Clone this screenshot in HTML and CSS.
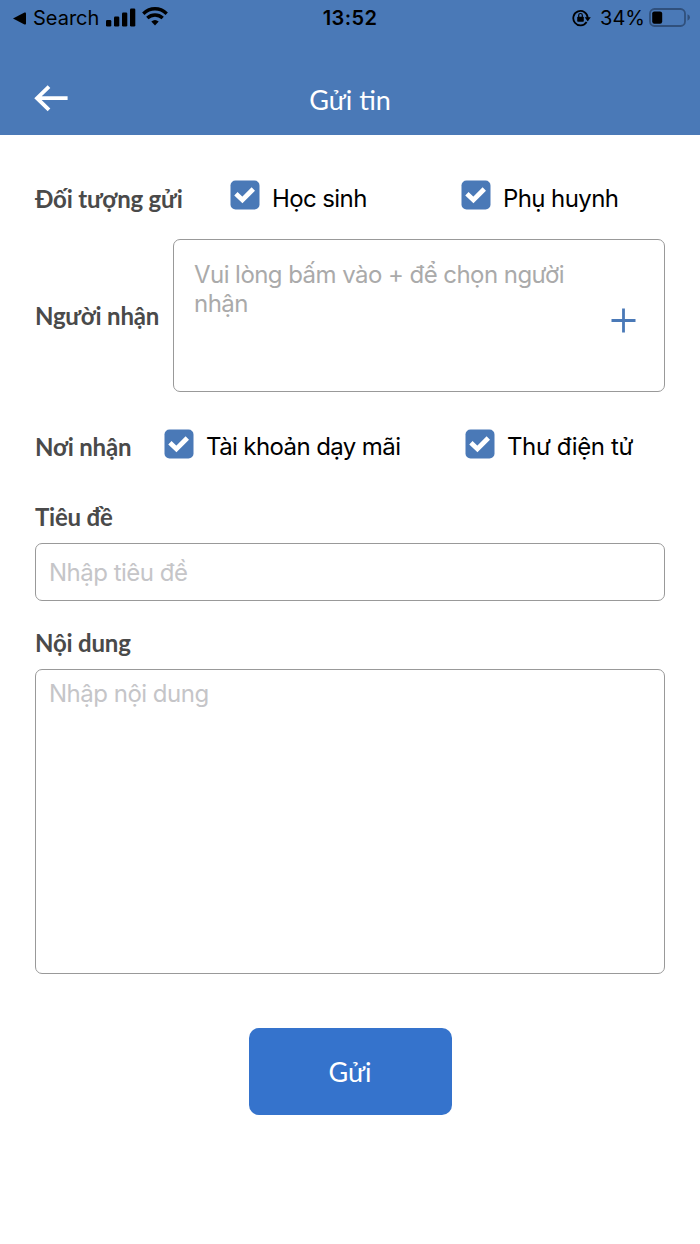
FILE: index.html
```html
<!DOCTYPE html>
<html lang="vi">
<head>
  <meta charset="UTF-8">
  <title>Gửi tin</title>
  <link rel="stylesheet" href="styles.css">
</head>
<body>

  <div class="header">
    <div class="status-bar">
      <div class="status-left">
        <svg class="caret" width="13" height="13" viewBox="0 0 13 13"><path d="M0 6.5L11.5 .6Q13 0 13 1.6V11.4Q13 13 11.5 12.4Z"/></svg>
        <span class="search">Search</span>
        <svg class="signal" width="30" height="19" viewBox="0 0 30 19">
          <rect x="0" y="12" width="5.3" height="6.5" rx="1.3"/>
          <rect x="8" y="8.5" width="5.3" height="10" rx="1.3"/>
          <rect x="16" y="4.5" width="5.3" height="14" rx="1.3"/>
          <rect x="24" y="0.5" width="5.3" height="18" rx="1.3"/>
        </svg>
        <svg class="wifi" width="26" height="19" viewBox="0 0 26 19">
          <path class="arc" d="M1.3 6.7Q6.5 1.8 13 1.8T24.7 6.7"/>
          <path class="arc" d="M5.3 11Q8.7 8 13 8T20.7 11"/>
          <path d="M9.3 14.6Q13 11.4 16.7 14.6L13 18.5Z"/>
        </svg>
      </div>
      <div class="time">13:52</div>
      <div class="status-right">
        <svg class="lock" width="20" height="18" viewBox="0 0 20 18">
          <path class="ring" d="M14.6 13A7.2 7.2 0 1 1 15.7 9"/>
          <path d="M12.7 8.2H18.8L15.7 12.6Z"/>
          <rect x="5.2" y="7.8" width="6.6" height="5" rx=".8"/>
          <path class="shackle" d="M6.7 8V6.3a1.8 1.8 0 0 1 3.6 0V8"/>
        </svg>
        <span class="percent">34%</span>
        <svg class="battery" width="42" height="20" viewBox="0 0 42 20">
          <rect class="case" x="1" y="1" width="35" height="17" rx="4.5"/>
          <rect x="3.2" y="3.4" width="10" height="12.4" rx="2.2"/>
          <path class="tip" d="M38.5 6.3Q41 7.4 41 9.5T38.5 12.7Z"/>
        </svg>
      </div>
    </div>
    <div class="nav">
      <svg class="back" width="34" height="27" viewBox="0 0 34 27"><path d="M15 1.6L3 13.2L15 24.8M3 13.2H33.6"/></svg>
      <h1>Gửi tin</h1>
    </div>
  </div>

  <div class="form">
    <div class="row target">
      <div class="label">Đối tượng gửi</div>
      <div class="option">
        <svg class="check" width="30" height="30" viewBox="0 0 30 30"><rect x=".5" y=".5" width="29" height="29" rx="5"/><path d="M5.9 13.8L12.4 19.9L23.3 9"/></svg>
        <span>Học sinh</span>
      </div>
      <div class="option">
        <svg class="check" width="30" height="30" viewBox="0 0 30 30"><rect x=".5" y=".5" width="29" height="29" rx="5"/><path d="M5.9 13.8L12.4 19.9L23.3 9"/></svg>
        <span>Phụ huynh</span>
      </div>
    </div>

    <div class="row receiver">
      <div class="label">Người nhận</div>
      <div class="box receiver-box">
        <div class="hint">Vui lòng bấm vào + để chọn người nhận</div>
        <svg class="plus" width="25" height="25" viewBox="0 0 25 25"><path d="M12.5 .5V24.5M.5 12.5H24.5"/></svg>
      </div>
    </div>

    <div class="row place">
      <div class="label">Nơi nhận</div>
      <div class="option">
        <svg class="check" width="30" height="30" viewBox="0 0 30 30"><rect x=".5" y=".5" width="29" height="29" rx="5"/><path d="M5.9 13.8L12.4 19.9L23.3 9"/></svg>
        <span>Tài khoản dạy mãi</span>
      </div>
      <div class="option">
        <svg class="check" width="30" height="30" viewBox="0 0 30 30"><rect x=".5" y=".5" width="29" height="29" rx="5"/><path d="M5.9 13.8L12.4 19.9L23.3 9"/></svg>
        <span class="email">Thư điện tử</span>
      </div>
    </div>

    <div class="label">Tiêu đề</div>
    <input type="text" class="box title-input" placeholder="Nhập tiêu đề">

    <div class="label content-label">Nội dung</div>
    <textarea class="box content-input" placeholder="Nhập nội dung"></textarea>

    <button class="send">Gửi</button>
  </div>

</body>
</html>
```
FILE: styles.css
```css
* {
  box-sizing: border-box;
}
body {
  margin: 0;
  background-color: #fff;
  font-family: Inter, sans-serif;
  color: #000;
}
svg {
  display: block;
  flex-shrink: 0;
}
.header {
  height: 135px;
  background-color: #4a79b7;
}
.status-bar {
  display: grid;
  grid-template-columns: 1fr auto 1fr;
  height: 36px;
  padding: 0 9px 0 13px;
  font-size: 20px;
  line-height: 36px;
}
.status-left, .status-right {
  display: flex;
  align-items: center;
}
.status-right {
  justify-content: flex-end;
}
.search {
  margin-left: 7px;
}
.signal {
  margin-left: 7px;
  margin-top: -2px;
}
.wifi {
  margin-left: 6px;
  margin-top: -3px;
}
.arc {
  fill: none;
  stroke: #000;
  stroke-width: 3.4;
}
.time {
  margin-right: 4px;
  font-weight: 600;
  letter-spacing: 0.4px;
}
.ring, .shackle {
  fill: none;
  stroke: #000;
  stroke-width: 1.8;
}
.shackle {
  stroke-width: 1.2;
}
.percent {
  margin-left: 8px;
}
.battery {
  margin-left: 4px;
  margin-top: -1px;
}
.case {
  fill: none;
  stroke: #30507c;
  stroke-width: 1.8;
}
.tip {
  fill: #30507c;
}
.nav {
  display: grid;
  grid-template-columns: 34px 1fr 34px;
  align-items: center;
  height: 99px;
  padding: 28px 34px 0;
}
.back {
  margin-top: -2px;
}
.back path {
  fill: none;
  stroke: #fff;
  stroke-width: 3.8;
}
h1 {
  margin: 0;
  font-family: Lato, sans-serif;
  font-size: 27px;
  font-weight: 400;
  line-height: 36px;
  text-align: center;
  color: #fff;
}
.form {
  padding: 45px 35px 0;
}
.row {
  display: flex;
}
.label {
  flex-shrink: 0;
  font-family: Lato, sans-serif;
  font-size: 24px;
  font-weight: 700;
  line-height: 36px;
  letter-spacing: -0.2px;
  color: #4a4a4a;
  white-space: nowrap;
}
.option {
  display: flex;
  flex-shrink: 0;
  gap: 12px;
  font-size: 24px;
  line-height: 36px;
  letter-spacing: -0.6px;
  white-space: nowrap;
}
.email {
  letter-spacing: -0.4px;
}
.check rect {
  fill: #4a79b7;
}
.check path {
  fill: none;
  stroke: #fff;
  stroke-width: 4.8;
}
.target {
  height: 59px;
  padding-top: 1px;
}
.target .check {
  margin-top: -1px;
}
.target .label {
  width: 195px;
}
.target .option:nth-child(2) {
  width: 231px;
}
.box {
  border: 1px solid #999;
  border-radius: 7px;
  background-color: #fff;
}
.receiver {
  align-items: center;
}
.receiver .label {
  width: 138px;
}
.receiver-box {
  display: flex;
  justify-content: space-between;
  flex: 1;
  height: 153px;
  padding: 20px 28px 0 20px;
}
.hint {
  width: 390px;
  font-size: 24px;
  line-height: 29px;
  letter-spacing: -0.55px;
  color: #aaa;
}
.plus {
  margin-top: 48px;
}
.plus path {
  stroke: #4a79b7;
  stroke-width: 2.8;
}
.place {
  margin-top: 37px;
  height: 70px;
}
.place .label {
  width: 129px;
}
.place .option:nth-child(2) {
  width: 301px;
}
input, textarea {
  display: block;
  width: 100%;
  font-family: Inter, sans-serif;
  font-size: 24px;
  letter-spacing: -0.5px;
  resize: none;
  outline: none;
}
.title-input {
  height: 58px;
  margin-top: 8px;
  padding: 0 13px;
}
.content-label {
  margin-top: 24px;
}
.content-input {
  height: 305px;
  margin-top: 8px;
  padding: 9px 13px;
  line-height: 29px;
}
::placeholder {
  color: #c5c5c8;
}
.send {
  display: block;
  width: 203px;
  height: 87px;
  margin: 54px auto 0;
  border: none;
  border-radius: 10px;
  background-color: #3573cc;
  font-family: Lato, sans-serif;
  font-size: 27px;
  color: #fff;
}
```
